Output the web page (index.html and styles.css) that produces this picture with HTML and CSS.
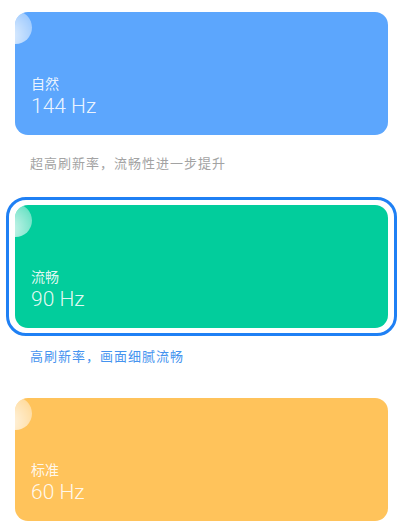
FILE: index.html
```html
<!DOCTYPE html>
<html>
	<head>
		<meta charset="utf-8">
		<title>刷新率</title>
		<link rel="stylesheet" href="styles.css">
	</head>
	<body>
		<div class="modes">
			<div class="mode">
				<div class="ring">
					<div class="card blue">
						<span class="bubble"></span>
						<div class="name">自然</div>
						<div class="rate">144 Hz</div>
					</div>
				</div>
				<p class="caption">超高刷新率，流畅性进一步提升</p>
			</div>
			<div class="mode selected">
				<div class="ring">
					<div class="card green">
						<span class="bubble"></span>
						<div class="name">流畅</div>
						<div class="rate">90 Hz</div>
					</div>
				</div>
				<p class="caption">高刷新率，画面细腻流畅</p>
			</div>
			<div class="mode">
				<div class="ring">
					<div class="card orange">
						<span class="bubble"></span>
						<div class="name">标准</div>
						<div class="rate">60 Hz</div>
					</div>
				</div>
			</div>
		</div>
	</body>
</html>
```

FILE: styles.css
```css
body {
	margin: 0;
	padding: 4px 0 0 0;
	overflow: hidden;
	background-color: white;
	font-family: "Noto Sans CJK SC", "Noto Sans", sans-serif;
}
.mode {
	margin: 0 8px 0 6px;
}
.ring {
	border: 3px solid transparent;
	border-radius: 20px;
	padding: 5px 6px;
}
.mode.selected .ring {
	border-color: #1f80f4;
}
.card {
	position: relative;
	overflow: hidden;
	height: 123px;
	box-sizing: border-box;
	border-radius: 13px;
	padding: 0 16px 16px 16px;
	display: flex;
	flex-direction: column;
	justify-content: flex-end;
	color: rgba(255, 255, 255, 0.9);
}
.card.blue {
	background-color: #5ca6fd;
}
.card.green {
	background-color: #02cd9c;
}
.card.orange {
	background-color: #ffc35b;
}
.bubble {
	position: absolute;
	left: -16px;
	top: -1px;
	width: 33px;
	height: 33px;
	border-radius: 50%;
	background: radial-gradient(circle at 25% 75%, rgba(255, 255, 255, 0.85), rgba(255, 255, 255, 0.5) 65%, rgba(255, 255, 255, 0.3));
}
.name {
	font-size: 14px;
	line-height: 20px;
}
.rate {
	font-family: Roboto, "Noto Sans", sans-serif;
	font-weight: 300;
	font-size: 21px;
	line-height: 26px;
}
.caption {
	margin: 10px 0 24px 24px;
	font-size: 13px;
	line-height: 20px;
	letter-spacing: 1px;
	color: #a3a3a3;
}
.mode.selected .caption {
	color: #4593ef;
}
```
